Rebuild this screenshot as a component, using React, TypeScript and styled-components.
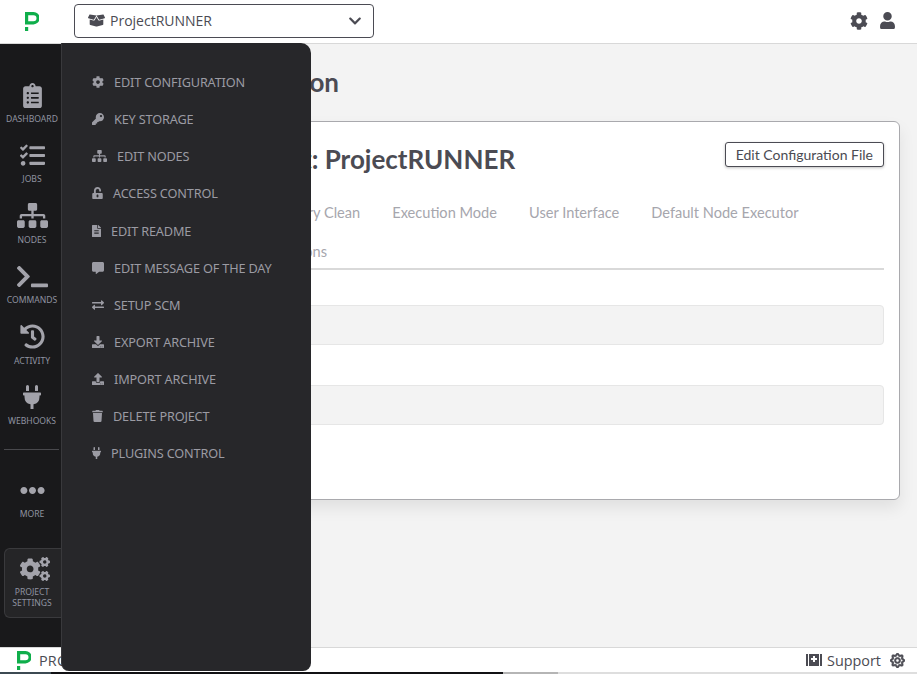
import React from "react";
import styled, { createGlobalStyle } from "styled-components";
import {
  FaBoxOpen,
  FaClipboardList,
  FaCog,
  FaCogs,
  FaDownload,
  FaEllipsisH,
  FaExchangeAlt,
  FaFileAlt,
  FaHistory,
  FaKey,
  FaCommentAlt,
  FaPlug,
  FaRegSun,
  FaSitemap,
  FaTasks,
  FaTerminal,
  FaTrash,
  FaUnlockAlt,
  FaUpload,
  FaUser,
  FaChevronDown,
} from "react-icons/fa";

const GlobalStyle = createGlobalStyle`
  html, body {
    margin: 0;
    padding: 0;
    height: 100%;
    overflow: hidden;
    background: #f3f3f3;
    font-family: "Noto Sans", sans-serif;
  }
  #root { height: 100%; }
  * { box-sizing: border-box; }
`;

const Page = styled.div`
  position: relative;
  width: 917px;
  height: 674px;
  display: flex;
  flex-direction: column;
  background: #000;
  overflow: hidden;
`;

const TopBar = styled.header`
  height: 44px;
  flex: none;
  background: #fff;
  border-bottom: 1px solid #d8d8d8;
  display: flex;
  align-items: center;
  padding: 0 21px 2px 25px;
`;

const LogoBox = styled.div`
  width: 49px;
  padding-top: 2px;
  display: flex;
  align-items: center;
`;

const ProjectSelect = styled.div`
  width: 300px;
  height: 34px;
  border: 1px solid #4b4b53;
  border-radius: 4px;
  display: flex;
  align-items: center;
  padding: 0 11px 0 13px;
  gap: 5px;
  color: #4b4b53;
  font-size: 14px;
  font-family: "Open Sans", sans-serif;
`;

const SelectLabel = styled.span`
  flex: 1;
`;

const TopIcons = styled.div`
  margin-left: auto;
  display: flex;
  align-items: center;
  gap: 11px;
  color: #4b4b53;
`;

const Body = styled.div`
  flex: 1;
  min-height: 0;
  display: flex;
`;

const Sidebar = styled.nav`
  width: 62px;
  flex: none;
  background: #19191b;
  border-right: 1px solid #2e2e31;
  display: flex;
  flex-direction: column;
  padding-top: 36px;
  position: relative;
`;

const NavItem = styled.div`
  height: 60.4px;
  padding-left: 3px;
  display: flex;
  flex-direction: column;
  align-items: center;
  justify-content: flex-start;
  gap: 4px;
`;

const NavIcon = styled.div`
  height: 30px;
  display: flex;
  align-items: center;
  justify-content: center;
  color: #a3a3ab;
`;

const NavLabel = styled.span`
  font-size: 8.6px;
  line-height: 11px;
  color: #8f93a0;
  text-align: center;
  white-space: nowrap;
`;

const NavRule = styled.div`
  flex: none;
  height: 1px;
  background: #49494d;
  margin: 6.5px 2px 0 4px;
`;

const MoreItem = styled(NavItem)`
  margin-top: 26px;
  gap: 3px;
`;

const SettingsTab = styled.div`
  position: absolute;
  left: 4px;
  top: 504px;
  width: 62px;
  height: 70px;
  background: #252527;
  border: 1px solid #3a3a3d;
  border-right: none;
  border-radius: 6px 0 0 6px;
  display: flex;
  flex-direction: column;
  align-items: center;
  padding: 5px 7px 0 0;
  color: #a3a3ab;
  gap: 3px;

  > svg {
    margin-left: 6px;
  }
`;

const SettingsLabel = styled(NavLabel)`
  white-space: normal;
  width: 56px;
`;

const Main = styled.main`
  flex: 1;
  min-width: 0;
  background: #f3f3f3;
  padding: 22px 17px 0 30px;
`;

const PageTitle = styled.h1`
  margin: 0 0 23px 36px;
  font-family: "Lato", sans-serif;
  font-size: 26px;
  line-height: 32px;
  font-weight: 700;
  color: #4b4b53;
`;

const Card = styled.section`
  height: 379px;
  background: #fff;
  border: 1px solid #a9a9ad;
  border-radius: 6px;
  box-shadow: 0 8px 16px rgba(0, 0, 0, 0.08);
  padding: 20px 15px 0 16px;
`;

const CardHead = styled.div`
  height: 35px;
  display: flex;
  justify-content: space-between;
  align-items: flex-start;
`;

const CardTitle = styled.h2`
  margin: 0;
  font-family: "Lato", sans-serif;
  font-size: 26px;
  line-height: 34px;
  font-weight: 700;
  color: #4b4b53;
`;

const EditButton = styled.button`
  height: 25px;
  padding: 0 10px 1px;
  background: #fff;
  border: 1px solid #4b4b53;
  border-radius: 3px;
  box-shadow: 0 1px 3px rgba(0, 0, 0, 0.25);
  font-family: "Lato", sans-serif;
  font-size: 14px;
  color: #4b4b53;
`;

const Tabs = styled.div`
  margin-top: 26px;
  display: flex;
  flex-wrap: wrap;
  justify-content: flex-start;
  row-gap: 19px;
  column-gap: 32px;
  border-bottom: 2px solid #d9d9d9;
  padding: 0 0 6px 9px;
`;

const Tab = styled.span`
  font-family: "Lato", sans-serif;
  font-size: 14.6px;
  line-height: 20px;
  color: #a6a6ad;
  white-space: nowrap;
`;

const FieldLabel = styled.div<{ $top: number }>`
  margin-top: ${(p) => p.$top}px;
  padding-left: 9px;
  height: 20px;
  font-family: "Lato", sans-serif;
  font-size: 14px;
  color: #4b4b53;
`;

const ReadOnlyField = styled.div`
  height: 40px;
  background: #f3f3f3;
  border: 1px solid #e6e6e6;
  border-radius: 4px;
`;

const Footer = styled.footer`
  height: 25px;
  flex: none;
  background: #fff;
  border-top: 1px solid #d8d8d8;
  display: flex;
  align-items: center;
  padding: 0 12px 0 17px;
  color: #4b4b53;
  font-family: "Open Sans", sans-serif;
  font-size: 14.4px;
`;

const FooterBrand = styled.span`
  margin-left: 8px;
  letter-spacing: 0.2px;
`;

const FooterRight = styled.div`
  margin-left: auto;
  display: flex;
  align-items: center;
  gap: 5px;
`;

const FooterGear = styled(FaRegSun)`
  margin-left: 4px;
  stroke: currentColor;
  stroke-width: 24px;
`;

const BottomStrip = styled.div`
  height: 2px;
  flex: none;
  display: flex;
`;

const StripPart = styled.div<{ $width?: number; $color: string }>`
  flex: ${(p) => (p.$width ? `0 0 ${p.$width}px` : "1")};
  background: ${(p) => p.$color};
`;

const Flyout = styled.aside`
  position: absolute;
  left: 61px;
  top: 43px;
  width: 250px;
  height: 628px;
  background: #27272a;
  border-radius: 0 10px 8px 8px;
  border-left: 1px solid #39393c;
  padding-top: 20.5px;
  z-index: 5;
`;

const MenuRow = styled.div<{ $iconWidth: number }>`
  height: 37.15px;
  display: flex;
  align-items: center;
  padding-left: 30px;
  gap: 10px;
  color: #9b9ba3;
  font-family: "Noto Sans", sans-serif;
  font-size: 12.7px;
  letter-spacing: -0.15px;
  white-space: nowrap;

  > svg {
    flex: none;
    width: ${(p) => p.$iconWidth}px;
    height: 12px;
  }
`;

const Logo = () => (
  <svg width="14" height="19" viewBox="0 0 14 19">
    <path
      d="M1.6 1.6H8.5a4.6 4.6 0 0 1 0 9.2H1.6z"
      fill="none"
      stroke="#0fae4b"
      strokeWidth="3.2"
    />
    <rect x="0" y="15" width="3.2" height="4" fill="#0fae4b" />
  </svg>
);

const BookIcon = () => (
  <svg width="16" height="14" viewBox="0 0 16 14">
    <path d="M0 1h2v12H0zM14 1h2v12h-2z" fill="#4b4b53" />
    <path d="M3 1h10v12H3z" fill="#4b4b53" />
    <path d="M7 5H5v2h2v2h2V7h2V5H9V3H7z" fill="#fff" />
  </svg>
);

const menu: { label: string; icon: React.ReactNode; width: number }[] = [
  { label: "EDIT CONFIGURATION", icon: <FaCog />, width: 12 },
  { label: "KEY STORAGE", icon: <FaKey />, width: 12 },
  { label: "EDIT NODES", icon: <FaSitemap />, width: 15 },
  { label: "ACCESS CONTROL", icon: <FaUnlockAlt />, width: 11 },
  { label: "EDIT README", icon: <FaFileAlt />, width: 9 },
  { label: "EDIT MESSAGE OF THE DAY", icon: <FaCommentAlt />, width: 12 },
  { label: "SETUP SCM", icon: <FaExchangeAlt />, width: 12 },
  { label: "EXPORT ARCHIVE", icon: <FaDownload />, width: 12 },
  { label: "IMPORT ARCHIVE", icon: <FaUpload />, width: 12 },
  { label: "DELETE PROJECT", icon: <FaTrash />, width: 11 },
  { label: "PLUGINS CONTROL", icon: <FaPlug />, width: 9 },
];

const nav: { label: string; icon: React.ReactNode }[] = [
  { label: "DASHBOARD", icon: <FaClipboardList size={25} /> },
  { label: "JOBS", icon: <FaTasks size={25} /> },
  { label: "NODES", icon: <FaSitemap size={31} /> },
  { label: "COMMANDS", icon: <FaTerminal size={31} /> },
  { label: "ACTIVITY", icon: <FaHistory size={25} /> },
  { label: "WEBHOOKS", icon: <FaPlug size={24} /> },
];

const App: React.FC = () => (
  <Page>
    <GlobalStyle />
    <TopBar>
      <LogoBox>
        <Logo />
      </LogoBox>
      <ProjectSelect>
        <FaBoxOpen size={17} />
        <SelectLabel>ProjectRUNNER</SelectLabel>
        <FaChevronDown size={14} />
      </ProjectSelect>
      <TopIcons>
        <FaCog size={18} />
        <FaUser size={17} />
      </TopIcons>
    </TopBar>
    <Body>
      <Sidebar>
        {nav.map((n) => (
          <NavItem key={n.label}>
            <NavIcon>{n.icon}</NavIcon>
            <NavLabel>{n.label}</NavLabel>
          </NavItem>
        ))}
        <NavRule />
        <MoreItem>
          <NavIcon>
            <FaEllipsisH size={25} />
          </NavIcon>
          <NavLabel>MORE</NavLabel>
        </MoreItem>
        <SettingsTab>
          <FaCogs size={30} />
          <SettingsLabel>PROJECT SETTINGS</SettingsLabel>
        </SettingsTab>
      </Sidebar>
      <Main>
        <PageTitle>Edit Configuration</PageTitle>
        <Card>
          <CardHead>
            <CardTitle>Configure Project: ProjectRUNNER</CardTitle>
            <EditButton>Edit Configuration File</EditButton>
          </CardHead>
          <Tabs>
            <Tab>Project Description</Tab>
            <Tab>History Clean</Tab>
            <Tab>Execution Mode</Tab>
            <Tab>User Interface</Tab>
            <Tab>Default Node Executor</Tab>
            <Tab>Default Node Execution Options</Tab>
          </Tabs>
          <FieldLabel $top={15}>Project Name</FieldLabel>
          <ReadOnlyField />
          <FieldLabel $top={20}>Label</FieldLabel>
          <ReadOnlyField />
        </Card>
      </Main>
    </Body>
    <Footer>
      <Logo />
      <FooterBrand>PROCESS AUTOMATION</FooterBrand>
      <FooterRight>
        <BookIcon />
        <span>Support</span>
        <FooterGear size={15} />
      </FooterRight>
    </Footer>
    <BottomStrip>
      <StripPart $width={51} $color="#3c4a52" />
      <StripPart $width={452} $color="#111114" />
      <StripPart $width={55} $color="#b5b5b5" />
      <StripPart $color="#dedede" />
    </BottomStrip>
    <Flyout>
      {menu.map((m) => (
        <MenuRow key={m.label} $iconWidth={m.width}>
          {m.icon}
          <span>{m.label}</span>
        </MenuRow>
      ))}
    </Flyout>
  </Page>
);

export default App;
